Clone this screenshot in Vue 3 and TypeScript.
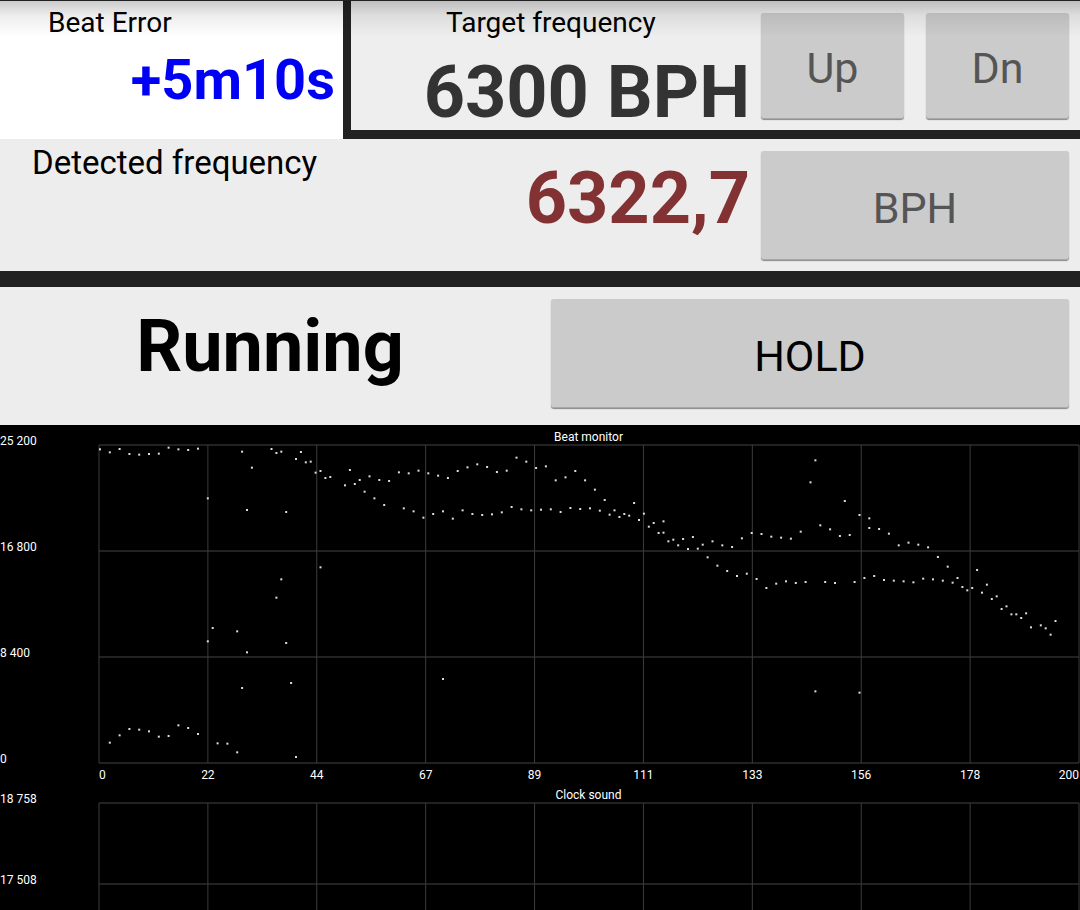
<script setup lang="ts">
type Sample = [beat: number, depth: number]

const BEATS = 200
const DEPTH_TOP = 61
const DEPTH_BOTTOM = 1015

const samples: Sample[] = [
  [0, 71], [2, 80], [4, 70], [6, 85], [8, 87], [10, 85], [12, 84], [14, 66], [16, 71], [18, 73], [20, 69],
  [22, 218], [29, 78], [31, 126], [30, 253], [23, 607], [22, 647], [28, 617], [30, 680], [29, 787],
  [2, 951], [4, 929], [6, 910], [8, 912], [10, 917], [12, 933], [14, 931], [16, 899], [18, 907], [20, 925],
  [24, 953], [26, 954], [28, 980],
  [35, 70], [36, 82], [37, 78], [40, 100], [41, 79], [42, 110], [43, 108], [44, 141], [45, 136], [46, 157],
  [47, 154], [38, 259], [45, 425], [37, 461], [36, 516], [38, 652], [39, 772], [40, 994],
  [50, 179], [51, 133], [52, 175], [53, 163], [54, 198], [55, 152], [56, 218], [57, 163], [58, 238], [59, 166],
  [61, 140], [62, 248], [63, 143], [64, 257], [65, 135], [66, 276], [67, 143], [68, 265], [69, 150], [70, 257],
  [71, 157], [72, 279], [73, 136], [74, 254], [75, 125], [76, 265], [77, 116], [78, 268], [79, 124], [80, 266],
  [81, 139], [82, 260], [83, 135], [84, 244], [85, 96], [86, 251], [87, 108], [88, 254], [89, 127], [70, 760],
  [90, 252], [91, 122], [92, 251], [93, 164], [94, 259], [95, 155], [96, 247], [97, 136], [98, 250], [99, 164],
  [100, 248], [101, 192], [102, 255], [103, 223], [104, 267], [105, 254], [106, 274], [107, 265], [108, 270],
  [109, 232], [110, 283], [111, 264], [112, 303], [113, 292], [114, 322], [115, 287], [115, 321], [116, 347],
  [117, 342], [118, 359], [119, 340], [120, 370], [121, 334], [122, 369], [123, 357], [124, 395], [125, 347],
  [126, 420], [127, 359], [128, 436], [129, 364], [130, 451], [131, 338], [132, 444], [133, 322], [134, 460],
  [135, 325], [136, 487], [137, 333], [138, 474], [139, 336], [140, 467], [141, 339], [142, 472], [143, 318],
  [144, 469], [145, 170], [146, 104], [147, 299], [148, 469], [149, 311], [150, 472], [151, 331], [152, 226],
  [153, 328], [154, 469], [155, 268], [156, 457], [157, 278], [157, 307], [158, 451], [159, 310], [160, 463],
  [161, 324], [162, 465], [163, 359], [164, 467], [165, 351], [166, 470], [167, 357], [168, 459], [169, 365],
  [170, 461], [171, 394], [172, 465], [173, 423], [174, 471], [175, 457], [176, 484], [177, 494], [178, 487],
  [179, 433], [180, 501], [181, 477], [182, 520], [183, 512], [184, 550], [185, 542], [186, 566], [187, 566],
  [188, 577], [189, 563], [190, 605], [192, 599], [193, 608], [194, 627], [195, 586], [146, 797], [155, 801],
]

const points = samples.map(([beat, depth]) => ({
  x: `${(beat / BEATS) * 100}%`,
  y: `${((depth - DEPTH_TOP) / (DEPTH_BOTTOM - DEPTH_TOP)) * 100}%`,
}))

const columns = Array.from({ length: 10 }, (_, i) => `${(i / 9) * 100}%`)
const beatRows = Array.from({ length: 4 }, (_, i) => `${(i / 3) * 100}%`)
const beatLevels = ['25 200', '16 800', '8 400', '0']
const beatTicks = ['0', '22', '44', '67', '89', '111', '133', '156', '178', '200']
const soundLevels = ['18 758', '17 508']
</script>

<template>
  <main class="app">
    <section class="row top">
      <div class="error">
        <span class="caption indent">Beat Error</span>
        <output class="error-value">+5m10s</output>
      </div>
      <div class="target">
        <div class="target-reading">
          <span class="caption indent-wide">Target frequency</span>
          <output class="value target-value">6300 BPH</output>
        </div>
        <div class="pad side pair">
          <button type="button" class="btn muted">Up</button>
          <button type="button" class="btn muted">Dn</button>
        </div>
      </div>
      <div class="shade"></div>
    </section>

    <section class="row detected">
      <span class="detected-label">Detected frequency</span>
      <output class="value detected-value">6322,7</output>
      <div class="pad side">
        <button type="button" class="btn muted">BPH</button>
      </div>
    </section>

    <section class="row status">
      <output class="value status-value">Running</output>
      <div class="pad hold">
        <button type="button" class="btn">HOLD</button>
      </div>
    </section>

    <section class="charts">
      <figure class="chart">
        <figcaption class="title">Beat monitor</figcaption>
        <div class="levels beat-levels">
          <span v-for="level in beatLevels" :key="level">{{ level }}</span>
        </div>
        <svg class="plot beat-plot" role="img" aria-label="Beat monitor">
          <line v-for="y in beatRows" :key="'r' + y" class="h" x1="0" x2="100%" :y1="y" :y2="y" />
          <line v-for="x in columns" :key="'c' + x" class="v" y1="0" y2="100%" :x1="x" :x2="x" />
          <rect v-for="(p, i) in points" :key="i" class="dot" :x="p.x" :y="p.y" width="2" height="2" />
        </svg>
        <div class="ticks">
          <span v-for="(tick, i) in beatTicks" :key="tick" class="tick" :style="{ left: columns[i] }">{{ tick }}</span>
        </div>
      </figure>
      <figure class="chart sound">
        <figcaption class="title">Clock sound</figcaption>
        <div class="levels sound-levels">
          <span v-for="level in soundLevels" :key="level">{{ level }}</span>
        </div>
        <svg class="plot sound-plot" role="img" aria-label="Clock sound">
          <line class="h" x1="0" x2="100%" y1="0" y2="0" />
          <line class="h" x1="0" x2="100%" y1="81" y2="81" />
          <line v-for="x in columns" :key="x" class="v" y1="0" y2="100%" :x1="x" :x2="x" />
        </svg>
      </figure>
    </section>
  </main>
</template>

<style>
body {
  margin: 0;
  background: #000;
}
</style>

<style scoped>
.app {
  display: flex;
  flex-direction: column;
  height: 100vh;
  min-height: 700px;
  overflow: hidden;
  font-family: Roboto, "Liberation Sans", sans-serif;
  color: #000;
  background: #000;
}

.row {
  display: flex;
  flex-shrink: 0;
  box-sizing: border-box;
  background: #ededed;
}

.top {
  position: relative;
  display: grid;
  grid-template-columns: 343fr 737fr;
  height: 139px;
  border-top: 1px solid #222;
}

.shade {
  position: absolute;
  inset: 0 0 auto;
  height: 36px;
  background: linear-gradient(rgba(0, 0, 0, 0.2), rgba(0, 0, 0, 0.07) 40%, transparent);
  pointer-events: none;
}

.error {
  display: flex;
  flex-direction: column;
  padding: 6px 8px 0 0;
  background: #fff;
}

.target {
  display: flex;
  border-left: 8px solid #222;
  border-bottom: 9px solid #222;
  background: #eee;
}

.target-reading {
  flex: 1;
  display: flex;
  flex-direction: column;
  padding-top: 6px;
}

.caption {
  font-size: 28px;
  line-height: 32px;
  white-space: nowrap;
}

.indent {
  padding-left: 48px;
}

.indent-wide {
  padding-left: 95px;
}

.error-value {
  margin-top: 9px;
  font-size: 56px;
  line-height: 64px;
  font-weight: 700;
  text-align: right;
  color: #0000f5;
}

.value {
  font-size: 72px;
  line-height: 72px;
  font-weight: 700;
  white-space: nowrap;
}

.target-value {
  margin-top: 18px;
  text-align: right;
  color: #333;
}

.pad {
  display: flex;
  box-sizing: border-box;
  padding: 12px 11px 11px;
}

.side {
  width: 330px;
  flex-shrink: 0;
}

.pair {
  gap: 22px;
}

.hold {
  padding-bottom: 17px;
}

.btn {
  flex: 1 1 0;
  min-width: 0;
  margin: 0;
  padding: 4px 0 0;
  border: 0;
  border-radius: 3px;
  background: #cbcbcb;
  box-shadow: inset 0 -1px 0 #a8a8a8, 0 1px 1px #888;
  font-family: inherit;
  font-size: 43px;
  line-height: 52px;
  color: #000;
}

.muted {
  color: #555;
}

.detected {
  height: 148px;
  border-bottom: 16px solid #222;
}

.detected-label {
  padding: 6px 0 0 32px;
  font-size: 33px;
  line-height: 36px;
  white-space: nowrap;
}

.detected-value {
  flex: 1;
  padding-top: 24px;
  text-align: right;
  color: #823233;
}

.status {
  display: grid;
  grid-template-columns: 1fr 1fr;
  height: 138px;
}

.status-value {
  padding-top: 24px;
  text-align: center;
}

.charts {
  flex: 1;
  min-height: 0;
  display: flex;
  flex-direction: column;
  overflow: hidden;
  padding-top: 5px;
  font-size: 12px;
  line-height: 14px;
  color: #fff;
}

.chart {
  display: grid;
  grid-template-columns: 99px 1fr;
  grid-template-rows: 15px 318px 25px;
  flex-shrink: 0;
  margin: 0;
  padding-right: 1px;
}

.sound {
  flex: 1 1 0;
  min-height: 0;
  grid-template-rows: 15px 1fr;
}

.title {
  grid-column: 1 / -1;
  padding-left: 98px;
  text-align: center;
}

.levels {
  display: flex;
  flex-direction: column;
  margin-top: -11px;
}

.beat-levels {
  height: 332px;
  justify-content: space-between;
}

.sound-levels {
  gap: 67px;
}

.plot {
  display: block;
  width: 100%;
  height: 100%;
  overflow: visible;
}

.h {
  stroke: #222;
  stroke-width: 2;
}

.v {
  stroke: #3c3c3c;
  stroke-width: 1;
}

.dot {
  fill: #ddd;
}

.ticks {
  grid-column: 2;
  position: relative;
}

.tick {
  position: absolute;
  top: 5px;
  transform: translateX(-50%);
}

.tick:first-child {
  transform: none;
}

.tick:last-child {
  transform: translateX(-100%);
}
</style>
